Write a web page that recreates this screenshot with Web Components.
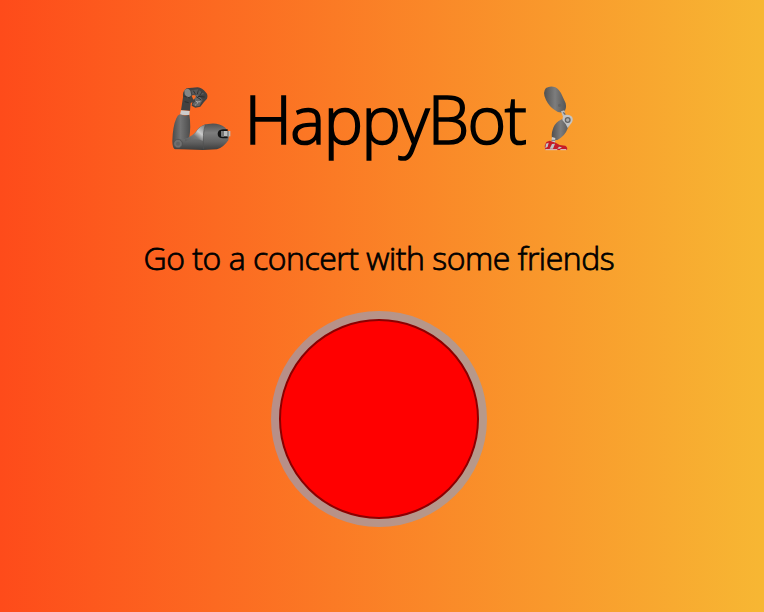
<!DOCTYPE html>
<html lang="en">
<head>
<meta charset="utf-8">
<title>HappyBot</title>
<style>
body { margin: 0; font-family: "Open Sans", "Noto Sans", sans-serif; color: #000; }
</style>
</head>
<body>
<happy-app></happy-app>
<script>
const define = (name, html) => {
  const tpl = document.createElement('template');
  tpl.innerHTML = html;
  customElements.define(name, class extends HTMLElement {
    constructor() {
      super();
      this.attachShadow({ mode: 'open' }).append(tpl.content.cloneNode(true));
    }
  });
};

define('bot-arm', `
<style>:host{display:block;width:75px;height:80px}svg{display:block}</style>
<svg width="75" height="80" viewBox="0 0 225 240" aria-hidden="true">
<defs>
<linearGradient id="f"><stop offset="0" stop-color="#4b4b4b"/><stop offset=".45" stop-color="#737373"/><stop offset="1" stop-color="#4c4c4c"/></linearGradient>
<linearGradient id="u" x2="0" y2="1"><stop offset="0" stop-color="#505050"/><stop offset=".35" stop-color="#7d7d7d"/><stop offset=".7" stop-color="#626262"/><stop offset="1" stop-color="#3c3c3c"/></linearGradient>
<linearGradient id="s" x1="0" y1="1" x2="1" y2="0"><stop offset="0" stop-color="#5b5b5b"/><stop offset=".4" stop-color="#777"/><stop offset=".62" stop-color="#ccc"/><stop offset="1" stop-color="#777"/></linearGradient>
</defs>
<path d="M48 91L54 52Q51 34 65 25L98 22Q112 24 122 37Q130 44 126 56L117 66L106 80L91 83L80 77L82 66L77 70L75 92Z" fill="#424242"/>
<path d="M80 44L100 45L113 60L103 78L90 79L82 73L91 64Z" fill="#666"/>
<path d="M80 47L88 45L93 50L85 59Z" fill="#fc6c22"/>
<path d="M89 60L98 67L92 75M94 50L109 60M59 65L71 68M99 49L119 51" fill="none" stroke="#2d2d2d" stroke-width="3"/>
<path d="M58 31Q68 21 76 32L79 46L68 55L59 43Z" fill="#858585"/>
<path d="M79 31L98 28L118 42L105 45L81 42Z" fill="#595959"/>
<path d="M85 32L91 42M100 31L97 42M112 35L105 45M56 48L75 54" stroke="#333" stroke-width="3"/>
<path d="M91 62L99 68L90 76M96 66L106 65" stroke="#aaa" stroke-width="3" fill="none"/>
<path d="M48 91L74 93L73 106L45 104Z" fill="#ccc"/>
<path d="M45 103Q58 109 73 104Q79 137 72 180L60 207L30 208Q22 204 22 184Q23 139 34 115Q38 105 45 103Z" fill="url(#f)"/>
<path d="M29 207Q22 200 29 184Q36 174 57 178Q84 170 98 148Q109 134 129 132Q158 126 181 143L193 163L190 181Q176 202 156 208L114 210Z" fill="url(#u)"/>
<path d="M60 178Q84 173 98 149Q107 137 121 134Q114 155 114 183Q96 172 60 184Z" fill="url(#s)"/>
<path d="M121 134Q112 160 116 209" stroke="#505050" stroke-width="2" fill="none"/>
<circle cx="39" cy="191" r="13" fill="#707070" stroke="#484848" stroke-width="2"/>
<circle cx="39" cy="191" r="6" fill="#626262"/>
<path d="M184 148H174Q158 149 158 162Q159 175 174 175H188V148Z" fill="#131313"/>
<path d="M169 153H196V169H169Z" fill="#bdbdbd"/><path d="M169 153H177V170H169ZM187 153H191V169H187Z" fill="#777"/>
</svg>`);

define('bot-leg', `
<style>:host{display:block;width:50px;height:80px}svg{display:block}</style>
<svg width="50" height="80" viewBox="0 0 150 240" aria-hidden="true">
<defs><linearGradient id="g"><stop offset="0" stop-color="#505050"/><stop offset=".5" stop-color="#7d7d7d"/><stop offset="1" stop-color="#555"/></linearGradient></defs>
<path d="M33 24Q47 16 61 22Q73 28 81 46L92 70Q96 88 86 96Q73 101 59 90Q43 80 33 60Q21 37 33 24Z" fill="url(#g)"/>
<circle cx="74" cy="76" r="5" fill="#626262"/>
<path d="M78 94L88 91L92 108L83 108Z" fill="#bbb"/>
<path d="M85 97L91 104" stroke="#666" stroke-width="4"/>
<path d="M83 116L71 123Q57 133 53 149Q48 162 52 180L67 180Q90 168 97 148L104 132Z" fill="url(#g)"/>
<path d="M84 108Q100 99 111 110Q116 118 110 128L98 144L92 132L82 120Z" fill="#c4c4c4"/>
<circle cx="98" cy="120" r="9" fill="#646464"/><circle cx="98" cy="120" r="5" fill="#aaa"/>
<path d="M51 171L61 174L60 190L49 188Z" fill="#ccc"/><path d="M49 181H61" stroke="#777" stroke-width="3"/>
<path d="M34 186L44 182L62 188L74 195L91 197Q99 202 96 210H31L29 198Z" fill="#c51c29"/>
<path d="M33 191L41 188L38 200L31 205ZM51 192L60 191L54 206L44 206ZM72 200L81 202L74 206L67 206Z" fill="#bcc7c7"/>
<path d="M31 209H67M76 209H94" stroke="#d9d2cb" stroke-width="3"/>
</svg>`);

define('bot-title', `
<style>
:host{display:flex;height:80px;margin-left:165px}
h1{margin:-8px 0 0;width:295px;padding-left:4.5px;box-sizing:border-box;font-size:66px;line-height:92px;font-weight:300;white-space:nowrap;letter-spacing:-1.6px}
.word{-webkit-text-stroke:1.7px #000}
</style>
<bot-arm></bot-arm><h1><span class="word"><slot></slot></span></h1><bot-leg></bot-leg>`);

define('bot-activity', `
<style>
:host{display:block;margin:76px 0 0 143.5px;width:480px}
p{margin:0;font-size:32px;line-height:44px;font-weight:300;white-space:nowrap;letter-spacing:-.47px}
span{-webkit-text-stroke:.8px #000}
</style><p><span><slot></slot></span></p>`);

define('bot-button', `
<style>
:host{display:block;width:200px;height:200px;margin:39px 0 0 279px}
button{display:block;box-sizing:border-box;width:200px;height:200px;padding:0;border:2px solid #8b0000;border-radius:50%;background:red;box-shadow:0 0 0 8px rgba(148,158,188,.66)}
</style><button type="button" aria-label="New activity"></button>`);

define('happy-app', `
<style>
:host{display:block;box-sizing:border-box;height:612px;padding-top:80px;overflow:hidden;background:linear-gradient(to right,#fe4b1a,#f7b733)}
</style>
<bot-title>HappyBot</bot-title>
<bot-activity>Go to a concert with some friends</bot-activity>
<bot-button></bot-button>`);
</script>
</body>
</html>
